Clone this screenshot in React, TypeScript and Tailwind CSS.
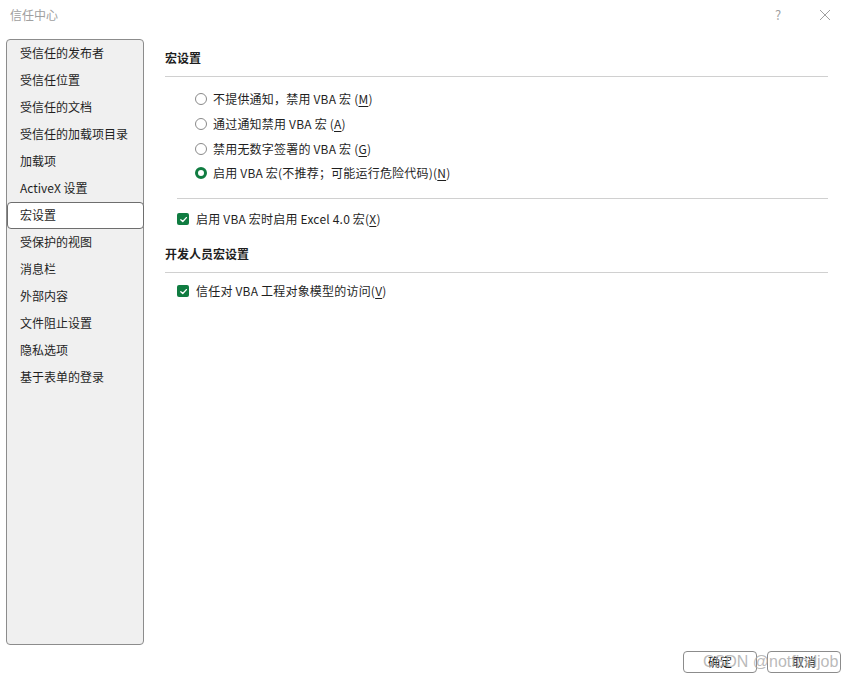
import React from 'react';

const navItems = [
  '受信任的发布者',
  '受信任位置',
  '受信任的文档',
  '受信任的加载项目录',
  '加载项',
  'ActiveX 设置',
  '宏设置',
  '受保护的视图',
  '消息栏',
  '外部内容',
  '文件阻止设置',
  '隐私选项',
  '基于表单的登录',
];

const radios: { label: string; key: string; checked?: boolean }[] = [
  { label: '不提供通知，禁用 VBA 宏 ', key: 'M' },
  { label: '通过通知禁用 VBA 宏 ', key: 'A' },
  { label: '禁用无数字签署的 VBA 宏 ', key: 'G' },
  { label: '启用 VBA 宏(不推荐；可能运行危险代码)', key: 'N', checked: true },
];

function Radio({ checked }: { checked?: boolean }) {
  if (checked) {
    return <span className="box-border inline-block w-[12px] h-[12px] rounded-full border-[3px] border-[#107c41] bg-white shrink-0" />;
  }
  return <span className="box-border inline-block w-[12px] h-[12px] rounded-full border border-[#8a8a8a] bg-white shrink-0" />;
}

function Checkbox() {
  return (
    <span className="inline-flex items-center justify-center w-[12px] h-[12px] rounded-[2px] bg-[#107c41] shrink-0">
      <svg width="9" height="9" viewBox="0 0 10 10" fill="none">
        <path d="M2 5.2 L4.2 7.3 L8.2 2.9" stroke="white" strokeWidth="1.5" strokeLinecap="round" strokeLinejoin="round" />
      </svg>
    </span>
  );
}

function Key({ k }: { k: string }) {
  return (
    <>
      (<span className="underline underline-offset-2">{k}</span>)
    </>
  );
}

export default function App() {
  return (
    <div
      className="relative w-[848px] h-[683px] bg-white text-[12px] text-[#1f1f1f] flex flex-col overflow-hidden"
      style={{ fontFamily: '"Segoe UI", "Noto Sans CJK SC", "Noto Sans", sans-serif' }}
    >
      {/* title bar */}
      <div className="h-[39px] flex items-start">
        <div className="pl-[10px] pt-[5px] text-[#a0a0a0] text-[12px] leading-[20px]">信任中心</div>
        <div className="ml-auto flex items-center pt-[5px] text-[#a0a0a0]">
          <span className="w-[12px] text-center text-[13px] leading-[20px]">?</span>
          <span className="ml-[35px] mr-[17px] w-[12px] h-[20px] flex items-center">
            <svg width="12" height="12" viewBox="0 0 12 12">
              <path d="M1 1 L11 11 M11 1 L1 11" stroke="#a0a0a0" strokeWidth="1" />
            </svg>
          </span>
        </div>
      </div>

      {/* body */}
      <div className="flex h-[606px]">
        <div className="ml-[6px] w-[138px] h-[606px] bg-[#f0f0f0] border border-[#8c8c8c] rounded-[4px] flex flex-col">
          {navItems.map((item) => {
            const selected = item === '宏设置';
            return (
              <div
                key={item}
                className={
                  selected
                    ? 'h-[27px] flex items-center whitespace-nowrap pb-[2px] px-[12px] bg-white border border-[#6e6e6e] rounded-[4px] -mr-[1px]'
                    : 'h-[27px] flex items-center whitespace-nowrap pb-[2px] px-[13px]'
                }
              >
                {item}
              </div>
            );
          })}
        </div>

        <div className="ml-[21px] mr-[20px] flex-1 flex flex-col">
          <div className="mt-[9px] h-[20px] leading-[20px] font-bold">宏设置</div>
          <div className="mt-[8px] border-b border-[#d0d0d0]" />
          <div className="mt-[10px] pl-[30px] flex flex-col tracking-[0.2px]">
            {radios.map((r) => (
              <div key={r.key} className="h-[24.7px] flex items-center gap-[6px]">
                <Radio checked={r.checked} />
                <span>
                  {r.label}
                  <Key k={r.key} />
                </span>
              </div>
            ))}
          </div>
          <div className="mt-[12px] ml-[12px] border-b border-[#d0d0d0]" />
          <div className="mt-[8px] pl-[12px] h-[25px] flex items-center gap-[7px] tracking-[0.2px]">
            <Checkbox />
            <span>
              启用 VBA 宏时启用 Excel 4.0 宏<Key k="X" />
            </span>
          </div>
          <div className="mt-[12px] h-[20px] leading-[20px] font-bold">开发人员宏设置</div>
          <div className="mt-[8px] border-b border-[#d0d0d0]" />
          <div className="mt-[6px] pl-[12px] h-[25px] flex items-center gap-[7px] tracking-[0.2px]">
            <Checkbox />
            <span>
              信任对 VBA 工程对象模型的访问<Key k="V" />
            </span>
          </div>
        </div>
      </div>

      {/* footer */}
      <div className="flex justify-end gap-[10px] pt-[6px] pr-[7px]">
        <button className="w-[74px] h-[22px] border border-[#8c8c8c] rounded-[4px] bg-white text-[12px] leading-[20px]">确定</button>
        <button className="w-[74px] h-[22px] border border-[#8c8c8c] rounded-[4px] bg-white text-[12px] leading-[20px]">取消</button>
      </div>

      {/* watermark */}
      <div
        className="absolute left-[703px] top-[651px] text-[16px] leading-[22px] text-[#a8a8a8]/80 pointer-events-none"
        style={{ fontFamily: '"Liberation Sans", "Noto Sans", sans-serif' }}
      >
        CSDN @notfindjob
      </div>
    </div>
  );
}
